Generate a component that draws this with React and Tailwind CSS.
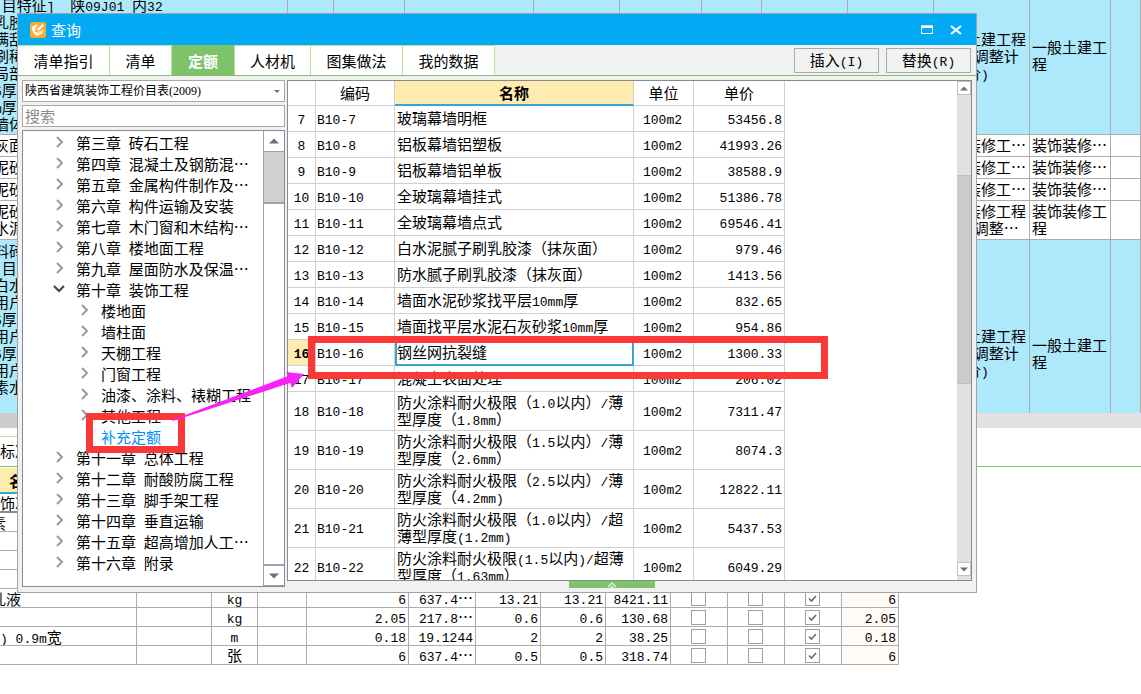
import React from "react";

/* Half-width runs are set in a monospaced face beside the full-width characters. */
function T({ children, bold }) {
  const weight = bold ? "font-bold" : "font-normal";
  return String(children)
    .split(/([\x20-\x7e]+)/)
    .filter(Boolean)
    .map((part, i) =>
      /^[\x20-\x7e]/.test(part) ? (
        <span key={i} className={`font-['Liberation_Mono',monospace] text-[13px] leading-none whitespace-pre ${weight}`}>{part}</span>
      ) : (
        part
      )
    );
}

/* One block per line keeps every line exactly one line-height tall. */
function Lines({ text }) {
  return text.split("\n").map((line, i) => (
    <span key={i} className="block h-[17px] leading-[15px] whitespace-pre"><T>{line}</T></span>
  ));
}

const clauseRows = [
  {
    blue: true,
    height: "h-[157px]",
    text: "[项目\n 目特征]  陕09J01 内32\n乳胶漆墙面\n满刮腻子\n刷稀释液\n局部刮腻子\n5厚水泥砂浆\nm厚水泥砂浆\n墙体基层",
    kind: "一般土建工程\n(人工调整计\n取市价)",
    major: "一般土建工\n程",
  },
  { height: "h-[22px]", text: "灰面", kind: "装饰装修工…", major: "装饰装修…" },
  { height: "h-[22px]", text: "泥砂浆", kind: "装饰装修工…", major: "装饰装修…" },
  { height: "h-[22px]", text: "泥砂浆", kind: "装饰装修工…", major: "装饰装修…" },
  { height: "h-[39px]", text: "泥砂浆\n水泥", kind: "装饰装修工程\n(人工调整…", major: "装饰装修工\n程" },
  {
    blue: true,
    height: "h-[228px]",
    text: "料砖\n 目特征\n白水泥\n用户自理\n5厚水泥\n用户自理\n5厚水泥\n用户自理\n素水泥浆\n\n\n\n",
    kind: "一般土建工程\n(人工调整计\n取市价)",
    major: "一般土建工\n程",
  },
];

function ClauseTable() {
  return (
    <div className="h-[413px] overflow-hidden">
      <table className="-mt-[22px] -ml-[8px] w-[calc(100%+8px)] table-fixed border-separate border-spacing-0 leading-[17px]">
        <colgroup>
          <col className="w-[296px]" />
          <col className="w-[46px]" />
          <col className="w-[71px]" />
          <col className="w-[129px]" />
          <col className="w-[86px]" />
          <col className="w-[82px]" />
          <col className="w-[60px]" />
          <col className="w-[86px]" />
          <col className="w-[86px]" />
          <col className="w-[96px]" />
          <col className="w-[81px]" />
          <col />
        </colgroup>
        <tbody>
          {clauseRows.map((r, i) => (
            <tr key={i} className={r.blue ? "bg-[#aee9fb]" : "bg-white"}>
              {Array.from({ length: 12 }, (_, c) => (
                <td key={c} className={`${r.height} overflow-hidden border-r border-b border-[#adadad] p-0 pl-[2px]`}>
                  {c === 0 && <Lines text={r.text} />}
                  {c === 9 && <Lines text={r.kind} />}
                  {c === 10 && <Lines text={r.major} />}
                </td>
              ))}
            </tr>
          ))}
        </tbody>
      </table>
    </div>
  );
}

const materialRows = [
  ["素"],
  [""],
  [""],
  [""],
  ["乳液", "kg", "6", "637.4…", "13.21", "13.21", "8421.11", "6"],
  ["", "kg", "2.05", "217.8…", "0.6", "0.6", "130.68", "2.05"],
  [") 0.9m宽", "m", "0.18", "19.1244", "2", "2", "38.25", "0.18"],
  ["", "张", "6", "637.4…", "0.5", "0.5", "318.74", "6"],
];

function Check({ checked, label }) {
  return (
    <span className="relative mx-auto block h-[15px] w-[15px]">
      <input
        type="checkbox"
        aria-label={label}
        defaultChecked={checked}
        className="peer block h-[15px] w-[15px] appearance-none border border-[#a0a0a4] bg-white"
      />
      <svg viewBox="0 0 15 15" className="pointer-events-none absolute inset-0 hidden h-[15px] w-[15px] peer-checked:block">
        <path d="M4 7.5 L6.5 10 L11 5" fill="none" stroke="#66667c" strokeWidth="1.6" />
      </svg>
    </span>
  );
}

function MaterialTable() {
  const cell = "h-[19px] overflow-hidden border-r border-b border-[#adadad] p-0 px-[2px] whitespace-pre";
  const checkCell = "h-[19px] border-r border-b border-[#adadad] p-0 pr-[2px]";
  return (
    <table className="w-[899px] table-fixed border-separate border-spacing-0 leading-[17px]">
      <colgroup>
        <col className="w-[137px]" />
        <col className="w-[75px]" />
        <col className="w-[46px]" />
        <col className="w-[49px]" />
        <col className="w-[102px]" />
        <col className="w-[67px]" />
        <col className="w-[65px]" />
        <col className="w-[65px]" />
        <col className="w-[65px]" />
        <col className="w-[57px]" />
        <col className="w-[57px]" />
        <col className="w-[57px]" />
        <col className="w-[57px]" />
      </colgroup>
      <thead>
        <tr>
          <th colSpan={13} className="h-[26px] border-b-2 border-[#38a5d0] bg-[#ffebb0] p-0 pl-[9px] text-left">名称</th>
        </tr>
      </thead>
      <tbody>
        <tr>
          <td colSpan={13} className="h-[19px] border-b-2 border-[#8a8a8a] p-0">饰次</td>
        </tr>
        {materialRows.map(([name, unit, qty, price, a, b, total, last], i) => (
          <tr key={i}>
            <td className={`${cell} pl-0`}>
              <span className={`block h-[17px] ${name === "素" || name === "乳液" ? "-ml-[9px]" : ""}`}><T>{name}</T></span>
            </td>
            <td className={cell} />
            <td className={`${cell} text-center`}><Lines text={unit || ""} /></td>
            <td className={cell} />
            <td className={`${cell} text-right`}><Lines text={qty || ""} /></td>
            <td className={`${cell} text-right`}><Lines text={price || ""} /></td>
            <td className={`${cell} text-right`}><Lines text={a || ""} /></td>
            <td className={`${cell} text-right`}><Lines text={b || ""} /></td>
            <td className={`${cell} text-right`}><Lines text={total || ""} /></td>
            <td className={checkCell}><Check label="暂估" /></td>
            <td className={checkCell}><Check label="锁定" /></td>
            <td className={checkCell}><Check label="计价" checked /></td>
            <td className={`${cell} bg-[#fffaf6] text-right`}><Lines text={last || ""} /></td>
          </tr>
        ))}
      </tbody>
    </table>
  );
}

const tree = [
  [1, "第三章 砖石工程"],
  [1, "第四章 混凝土及钢筋混…"],
  [1, "第五章 金属构件制作及…"],
  [1, "第六章 构件运输及安装"],
  [1, "第七章 木门窗和木结构…"],
  [1, "第八章 楼地面工程"],
  [1, "第九章 屋面防水及保温…"],
  [1, "第十章 装饰工程", "open"],
  [2, "楼地面"],
  [2, "墙柱面"],
  [2, "天棚工程"],
  [2, "门窗工程"],
  [2, "油漆、涂料、裱糊工程"],
  [2, "其他工程"],
  [2, "补充定额", "active"],
  [1, "第十一章 总体工程"],
  [1, "第十二章 耐酸防腐工程"],
  [1, "第十三章 脚手架工程"],
  [1, "第十四章 垂直运输"],
  [1, "第十五章 超高增加人工…"],
  [1, "第十六章 附录"],
];

function Chevron({ state }) {
  if (state === "active") return null;
  if (state === "open")
    return (
      <svg viewBox="0 0 12 12" className="h-[12px] w-[12px]">
        <path d="M1 3 L6 8 L11 3" fill="none" stroke="#454545" strokeWidth="2.2" />
      </svg>
    );
  return (
    <svg viewBox="0 0 12 12" className="h-[12px] w-[12px]">
      <path d="M4 1 L9 6 L4 11" fill="none" stroke="#9a9a9a" strokeWidth="2" />
    </svg>
  );
}

function Triangle({ down, size }) {
  return (
    <svg viewBox="0 0 10 6" className={size}>
      <path d={down ? "M0 0.5 H10 L5 5.5 Z" : "M0 5.5 H10 L5 0.5 Z"} fill="#6b6f80" />
    </svg>
  );
}

function TreePanel() {
  return (
    <div className="flex h-[457px] overflow-hidden border border-[#868a94] bg-white">
      <ul className="min-w-0 flex-1 pt-[2px]">
        {tree.map(([level, name, state]) => (
          <li key={name} className="flex h-[21px] items-center">
            <span className={`flex w-[23px] shrink-0 pb-[3px] ${level === 1 ? "ml-[30px]" : "ml-[55px]"}`}>
              <Chevron state={state} />
            </span>
            <a href="#" className={`pb-[2px] leading-[19px] whitespace-nowrap ${state === "active" ? "text-[#0090ff]" : "text-black"}`}>
              <T>{name}</T>
            </a>
          </li>
        ))}
      </ul>
      <div className="flex w-[21px] shrink-0 flex-col border-l border-[#9da0a6]">
        <button aria-label="向上滚动" className="flex h-[21px] items-center justify-center border-b border-[#9da0a6]">
          <Triangle size="h-[6px] w-[10px]" />
        </button>
        <div className="h-[52px] border-b-2 border-[#a3a3a3] bg-[#d0d0d0]" />
        <div className="flex-1" />
        <button aria-label="向下滚动" className="flex h-[22px] items-center justify-center border-t-2 border-b border-[#9da0a6]">
          <Triangle down size="h-[6px] w-[10px]" />
        </button>
      </div>
    </div>
  );
}

const quotaRows = [
  [7, "玻璃幕墙明框", "53456.8"],
  [8, "铝板幕墙铝塑板", "41993.26"],
  [9, "铝板幕墙铝单板", "38588.9"],
  [10, "全玻璃幕墙挂式", "51386.78"],
  [11, "全玻璃幕墙点式", "69546.41"],
  [12, "白水泥腻子刷乳胶漆（抹灰面）", "979.46"],
  [13, "防水腻子刷乳胶漆（抹灰面）", "1413.56"],
  [14, "墙面水泥砂浆找平层10mm厚", "832.65"],
  [15, "墙面找平层水泥石灰砂浆10mm厚", "954.86"],
  [16, "钢丝网抗裂缝", "1300.33"],
  [17, "混凝土表面处理", "206.02"],
  [18, "防火涂料耐火极限（1.0以内）/薄\n型厚度（1.8mm）", "7311.47"],
  [19, "防火涂料耐火极限（1.5以内）/薄\n型厚度（2.6mm）", "8074.3"],
  [20, "防火涂料耐火极限（2.5以内）/薄\n型厚度（4.2mm)", "12822.11"],
  [21, "防火涂料耐火极限（1.0以内）/超\n薄型厚度(1.2mm)", "5437.53"],
  [22, "防火涂料耐火极限(1.5以内)/超薄\n型厚度（1.63mm）", "6049.29"],
];

function QuotaGrid() {
  const line = "border-r border-b border-[#d0d0d0] p-0 pb-[2px]";
  return (
    <div className="flex h-[501px] min-w-0 flex-1 overflow-hidden border border-[#868a94] bg-white">
      <div className="min-w-0 flex-1 overflow-hidden">
        <table className="w-[497px] table-fixed border-separate border-spacing-0 leading-[17px]">
          <colgroup>
            <col className="w-[28px]" />
            <col className="w-[79px]" />
            <col className="w-[239px]" />
            <col className="w-[60px]" />
            <col className="w-[91px]" />
          </colgroup>
          <thead>
            <tr>
              <th className={`${line} h-[25px]`} aria-label="序号" />
              <th className={`${line} font-normal`}>编码</th>
              <th className="border-r border-b-2 border-r-[#d0d0d0] border-b-[#38a5d0] bg-[#ffebb0] p-0 font-bold">名称</th>
              <th className={`${line} font-normal`}>单位</th>
              <th className={`${line} font-normal`}>单价</th>
            </tr>
          </thead>
          <tbody>
            {quotaRows.map(([no, name, price]) => {
              const active = no === 16;
              return (
                <tr key={no} className={no > 17 ? "h-[39px]" : "h-[26px]"}>
                  <td className={`${line} text-center ${active ? "bg-[#ffebb0]" : ""}`}><T bold={active}>{no}</T></td>
                  <td className={`${line} pl-[1px]`}><T>{`B10-${no}`}</T></td>
                  <td className={`border-r border-b border-[#d0d0d0] p-0 pl-[2px] ${active ? "outline-2 -outline-offset-2 outline-[#38a5d0]" : ""}`}><Lines text={name} /></td>
                  <td className={`${line} pr-[2px] text-center`}><T>100m2</T></td>
                  <td className={`${line} pr-[2px] text-right`}><T>{price}</T></td>
                </tr>
              );
            })}
          </tbody>
        </table>
      </div>
      <div className="flex w-[14px] shrink-0 flex-col bg-[#e1e1e1]">
        <button aria-label="向上滚动" className="flex h-[14px] items-center justify-center border border-[#c0c0c0] bg-white">
          <Triangle size="h-[5px] w-[8px]" />
        </button>
        <div className="h-[80px]" />
        <div className="h-[209px] border-y border-[#bdbdbd] bg-[#cbcbcb]" />
        <div className="flex-1" />
        <button aria-label="向下滚动" className="mb-[4px] flex h-[14px] items-center justify-center border border-[#c0c0c0] bg-white">
          <Triangle down size="h-[5px] w-[8px]" />
        </button>
      </div>
    </div>
  );
}

const tabs = [
  ["清单指引", "w-[92px]"],
  ["清单", "w-[62px]"],
  ["定额", "w-[63px]"],
  ["人材机", "w-[76px]"],
  ["图集做法", "w-[92px]"],
  ["我的数据", "w-[92px]"],
];

function AppIcon() {
  return (
    <svg viewBox="0 0 16 16" className="h-[16px] w-[16px]">
      <rect width="16" height="16" rx="2.5" fill="#fbab2c" />
      <path d="M1.5 5 L6 2.5 L8 3 L5.5 6.5 L5 10 L9 9.6 L14 7.5 L12.5 11.5 L7 14 L4.5 12.5 L2.5 9 Z" fill="#fff6e6" />
      <path d="M6 9.2 L7.2 6.2 L12.6 1.6 L14.4 3.6 L9.4 8.4 Z" fill="#fff" stroke="#f7a01e" strokeWidth="0.7" />
      <path d="M5.5 11.6 L12 9.4" stroke="#fbc468" strokeWidth="0.8" />
    </svg>
  );
}

function QueryDialog() {
  return (
    <section aria-label="查询" className="absolute top-[13px] right-[164px] left-[17px] flex flex-col border border-[#a3a3a3] bg-[#f1f1f1]">
      <header className="flex h-[31px] items-center bg-[#02a9f3] pr-[14px] pl-[12px] text-white">
        <AppIcon />
        <h1 className="ml-[5px] flex-1 leading-[21px]">查询</h1>
        <button aria-label="最大化" className="mr-[17px]">
          <svg viewBox="0 0 12 12" className="h-[12px] w-[12px]">
            <path d="M0.5 2 H11.5 V9.5 H0.5 Z" fill="none" stroke="#fff" />
            <path d="M0 1.5 H12 V4 H0 Z" fill="#fff" />
          </svg>
        </button>
        <button aria-label="关闭">
          <svg viewBox="0 0 12 12" className="h-[12px] w-[12px]">
            <path d="M1 2 L11 10 M11 2 L1 10" stroke="#fff" strokeWidth="2.2" />
          </svg>
        </button>
      </header>
      <nav className="flex h-[31px] items-stretch border-b border-[#7ec36a] pr-[5px]">
        {tabs.map(([name, width]) => (
          <button
            key={name}
            className={`${width} border-r border-[#b4e4a2] leading-[17px] ${
              name === "定额" ? "bg-[#7ec36a] font-bold text-white" : "border-t border-t-[#b4e4a2] bg-white"
            }`}
          >
            {name}
          </button>
        ))}
        <div className="ml-auto flex items-center gap-[7px]">
          <button className="h-[25px] w-[85px] border border-[#a9a9a9] leading-[17px]"><T>插入(I)</T></button>
          <button className="h-[25px] w-[85px] border border-[#a9a9a9] leading-[17px]"><T>替换(R)</T></button>
        </div>
      </nav>
      <div className="flex gap-[2px] px-[4px] pt-[4px]">
        <div className="flex w-[263px] shrink-0 flex-col gap-[3px]">
          <div className="relative">
            <select
              aria-label="定额库"
              className="block h-[22px] w-full appearance-none border border-[#a9a9a9] bg-white pl-[2px] font-['Liberation_Serif','Noto_Sans_CJK_SC',serif] text-[12px] font-normal"
            >
              <option>陕西省建筑装饰工程价目表(2009)</option>
            </select>
            <svg viewBox="0 0 6 3" className="pointer-events-none absolute top-[10px] right-[5px] h-[3px] w-[6px]">
              <path d="M0 0 H6 L3 3 Z" fill="#6b6f80" />
            </svg>
          </div>
          <input
            aria-label="搜索"
            placeholder="搜索"
            className="block h-[22px] w-full border border-[#a9a9a9] bg-white px-[2px] text-[15px] placeholder:text-[#8c8c8c]"
          />
          <TreePanel />
        </div>
        <QuotaGrid />
      </div>
      <button aria-label="展开" className="-mt-[6px] mb-[4px] ml-[551px] flex h-[7px] w-[86px] items-center justify-center bg-[#7ec36a]">
        <svg viewBox="0 0 10 6" className="h-[6px] w-[10px]">
          <path d="M1 5 L5 1 L9 5 M3.5 6 L5 4.5 L6.5 6" fill="none" stroke="#dff3d8" strokeWidth="1.3" />
        </svg>
      </button>
    </section>
  );
}

export default function App() {
  return (
    <main className="relative min-h-screen overflow-hidden bg-white font-['Noto_Sans_CJK_SC',sans-serif] text-[15px] font-normal text-black">
      <ClauseTable />
      <div className="flex h-[15px] bg-[#e1e1e1]">
        <div className="w-[500px] bg-[#cdcdcd]" />
      </div>
      <div className="mt-[8px] w-[500px] border-t border-[#b4e4a2]" />
      <div className="flex h-[30px] items-center border-b border-[#7ec36a]">标准换算</div>
      <div className="pt-[1px]">
        <MaterialTable />
      </div>
      <QueryDialog />
      <div className="pointer-events-none absolute top-[413px] left-[86px] h-[40px] w-[99px] border-[7px] border-[#fc3737]" />
      <div className="pointer-events-none absolute top-[336px] left-[308px] h-[43px] w-[520px] border-[7px] border-[#fc3737]" />
      <svg viewBox="0 0 134 52" className="pointer-events-none absolute top-[371px] left-[171px] h-[52px] w-[134px]">
        <path d="M1 49 L117 5 L115 1 L133 3 L121 17 L119 12 L2 50 Z" fill="#f622f6" />
      </svg>
    </main>
  );
}
